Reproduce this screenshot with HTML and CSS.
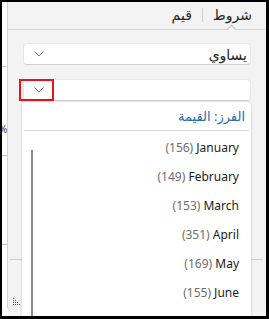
FILE: index.html
```html
<!DOCTYPE html>
<html lang="ar">
<head>
    <meta charset="UTF-8">
    <meta name="viewport" content="width=device-width, initial-scale=1.0">
    <title>Filter</title>
    <link rel="stylesheet" href="styles.css">
</head>
<body>
    <div class="frame">
        <div class="sheet">
            <span class="sheet-cell">%</span>
        </div>
        <div class="panel">
            <div class="tabs">
                <div class="tab active">شروط</div>
                <div class="tab-sep"></div>
                <div class="tab">قيم</div>
            </div>

            <div class="field first">
                <span class="field-text">يساوي</span>
                <svg class="chev" width="10" height="6" viewBox="0 0 10 6"><path d="M0.5 0.5 L5 5 L9.5 0.5" fill="none" stroke="#7a7a7a" stroke-width="1"/></svg>
            </div>

            <div class="field second">
                <span class="field-text"></span>
                <svg class="chev" width="10" height="6" viewBox="0 0 10 6"><path d="M0.5 0.5 L5 5 L9.5 0.5" fill="none" stroke="#7a7a7a" stroke-width="1"/></svg>
                <div class="mark"></div>

                <div class="popup">
                    <div class="popup-head">الفرز: القيمة</div>
                    <div class="popup-body">
                        <div class="scroll"></div>
                        <div class="items">
                            <div class="item"><span class="count">(156)</span> January</div>
                            <div class="item"><span class="count">(149)</span> February</div>
                            <div class="item"><span class="count">(153)</span> March</div>
                            <div class="item"><span class="count">(351)</span> April</div>
                            <div class="item"><span class="count">(169)</span> May</div>
                            <div class="item"><span class="count">(155)</span> June</div>
                        </div>
                    </div>
                </div>
            </div>

            <div class="spacer"></div>
            <div class="rule"></div>
            <div class="foot">
                <svg class="grip" width="8" height="8" viewBox="0 0 8 8">
                    <rect x="0" y="0" width="1" height="1" fill="#555"/>
                    <rect x="0" y="2" width="1" height="1" fill="#555"/>
                    <rect x="2" y="2" width="1" height="1" fill="#555"/>
                    <rect x="0" y="4" width="1" height="1" fill="#555"/>
                    <rect x="2" y="4" width="1" height="1" fill="#555"/>
                    <rect x="4" y="4" width="1" height="1" fill="#555"/>
                    <rect x="0" y="6" width="1" height="1" fill="#555"/>
                    <rect x="2" y="6" width="1" height="1" fill="#555"/>
                    <rect x="4" y="6" width="1" height="1" fill="#555"/>
                    <rect x="6" y="6" width="1" height="1" fill="#555"/>
                </svg>
            </div>
        </div>
    </div>
</body>
</html>
```

FILE: styles.css
```css
body {
    margin: 0;
    font-family: "Noto Sans", "DejaVu Sans", sans-serif;
    background-color: black;
}
.frame {
    width: 269px;
    height: 319px;
    box-sizing: border-box;
    border-style: solid;
    border-color: black;
    border-width: 2px 3px 3px 2px;
    background-color: #f7f7f7;
    display: flex;
    overflow: hidden;
}
.sheet {
    width: 5px;
    background-color: #fdfdfd;
    background-image: repeating-linear-gradient(to bottom, transparent 0, transparent 64px, #c8c8c8 64px, #c8c8c8 65px, transparent 65px, transparent 89px);
    overflow: hidden;
    padding-top: 120px;
    box-sizing: border-box;
}
.sheet-cell {
    display: block;
    margin-left: -3px;
    font-size: 10px;
    color: #333;
}
.panel {
    flex: 1;
    background-color: #f3f3f3;
    border-left: 1px solid #d4d4d4;
    border-radius: 0 0 6px 6px;
    margin-bottom: 4px;
    display: flex;
    flex-direction: column;
    position: relative;
}
.tabs {
    height: 27px;
    border-bottom: 1px solid #d6d6d6;
    display: flex;
    direction: rtl;
    align-items: stretch;
    padding-right: 14px;
    font-size: 14px;
    color: #262626;
}
.tab {
    position: relative;
    display: flex;
    align-items: center;
    padding-bottom: 2px;
}
.tab.active::after {
    content: "";
    position: absolute;
    left: 50%;
    bottom: -4px;
    width: 6px;
    height: 6px;
    margin-left: -4px;
    background-color: #f3f3f3;
    border-top: 1px solid #c4c4c4;
    border-left: 1px solid #c4c4c4;
    transform: rotate(45deg);
}
.tab-sep {
    width: 1px;
    height: 14px;
    align-self: center;
    background-color: #cfcfcf;
    margin: 0 10px 2px 10px;
}
.field {
    height: 22px;
    box-sizing: border-box;
    margin: 0 15px 0 15px;
    background-color: white;
    border: 1px solid #e6e6e6;
    border-bottom-color: #d2d2d2;
    border-radius: 4px;
    display: flex;
    direction: rtl;
    align-items: center;
    justify-content: space-between;
    padding: 0 3px 0 10px;
    position: relative;
}
.field.first {
    margin-top: 13px;
}
.field.second {
    margin-top: 14px;
}
.field-text {
    font-size: 14px;
    color: #1e1e1e;
}
.chev {
    display: block;
}
.mark {
    position: absolute;
    left: -5px;
    top: -1px;
    width: 35px;
    height: 22px;
    border: 2px solid #e8141c;
    box-sizing: border-box;
}
.popup {
    position: absolute;
    top: calc(100% + 2px);
    left: -2px;
    right: -1px;
    height: 220px;
    background-color: white;
    border-radius: 4px;
    box-shadow: 0 0 3px rgba(0, 0, 0, 0.18);
    direction: rtl;
    z-index: 2;
}
.popup-head {
    height: 28px;
    margin: 0 2px;
    border-bottom: 1px solid #d9d9d9;
    padding-right: 4px;
    display: flex;
    align-items: center;
    font-size: 13px;
    color: #1f6db0;
}
.popup-body {
    display: flex;
    direction: ltr;
}
.scroll {
    width: 2px;
    margin-left: 9px;
    margin-top: 19px;
    height: 200px;
    background-color: #8a8a8a;
}
.items {
    flex: 1;
    padding-top: 2px;
    padding-right: 12px;
    text-align: right;
}
.item {
    height: 29px;
    line-height: 29px;
    font-size: 12px;
    color: #1b1b1b;
}
.count {
    color: #6e6e6e;
}
.spacer {
    flex: 1;
}
.rule {
    height: 1px;
    background-color: #cfcfcf;
    margin: 0 3px 0 2px;
}
.foot {
    height: 52px;
    display: flex;
    align-items: flex-end;
    padding: 0 0 6px 5px;
    box-sizing: border-box;
}
.grip {
    display: block;
}
```
